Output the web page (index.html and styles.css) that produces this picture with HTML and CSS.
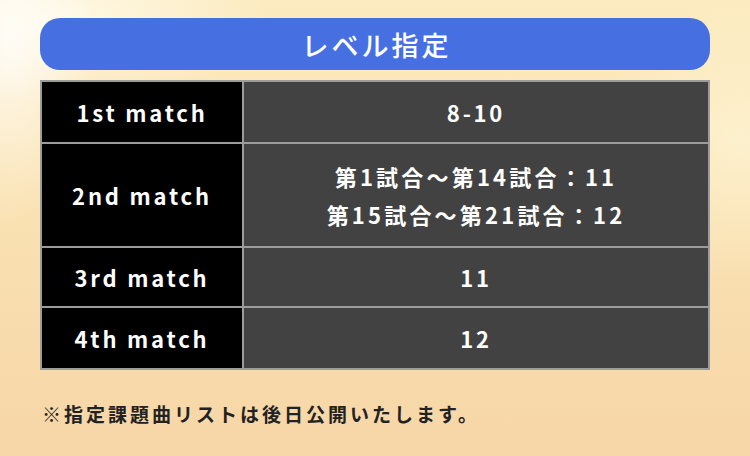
FILE: index.html
```html
<!DOCTYPE html>
<html lang="ja">
<head>
<meta charset="utf-8">
<title>レベル指定</title>
<link rel="stylesheet" href="styles.css">
</head>
<body>
<main class="page">
  <h1 class="title">レベル指定</h1>
  <div class="table">
    <div class="head">1st match</div>
    <div class="val">8-10</div>
    <div class="head">2nd match</div>
    <div class="val multi"><span>第1試合～第14試合：11</span><span>第15試合～第21試合：12</span></div>
    <div class="head">3rd match</div>
    <div class="val">11</div>
    <div class="head">4th match</div>
    <div class="val">12</div>
  </div>
  <p class="note">※指定課題曲リストは後日公開いたします。</p>
</main>
</body>
</html>
```

FILE: styles.css
```css
html, body {
  margin: 0;
  padding: 0;
}
body {
  width: 750px;
  height: 456px;
  overflow: hidden;
  font-family: "Noto Sans CJK JP", "Noto Sans", sans-serif;
  background:
    radial-gradient(ellipse 120px 260px at 10px 40px, rgba(255,255,255,0.75), rgba(255,255,255,0) 70%),
    radial-gradient(ellipse 300px 120px at 60px 20px, rgba(255,252,240,0.8), rgba(255,255,255,0) 70%),
    radial-gradient(ellipse 200px 200px at 740px 140px, rgba(255,248,220,0.6), rgba(255,255,255,0) 70%),
    linear-gradient(180deg, #fcebc0 0%, #fae3b4 40%, #f8dbac 75%, #f7d6a7 100%);
}
.page {
  padding: 18px 40px 0;
  display: flex;
  flex-direction: column;
}
.title {
  margin: 0;
  height: 52px;
  border-radius: 20px;
  background: #4670e2;
  color: #fff;
  font-size: 27px;
  font-weight: 500;
  letter-spacing: 3px;
  text-indent: 3px;
  display: flex;
  align-items: center;
  justify-content: center;
}
.table {
  margin-top: 10px;
  display: grid;
  grid-template-columns: 200px 1fr;
  grid-template-rows: 60px 102px 58px 60px;
  gap: 2px;
  padding: 2px;
  background: #9c9c9c;
}
.head, .val {
  display: flex;
  align-items: center;
  justify-content: center;
  color: #fff;
  font-weight: 700;
  font-size: 22px;
  letter-spacing: 2.8px;
}
.head {
  background: #000;
}
.val {
  background: #424242;
}
.multi {
  flex-direction: column;
  line-height: 38px;
  letter-spacing: 3.2px;
}
.note {
  margin: 30px 0 0 2px;
  font-size: 19px;
  font-weight: 700;
  color: #222;
  letter-spacing: 3px;
}
```
